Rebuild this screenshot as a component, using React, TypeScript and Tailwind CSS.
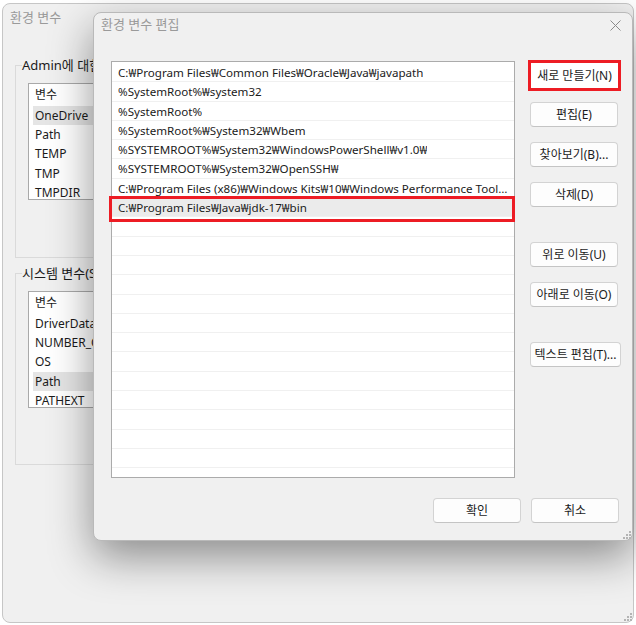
import React from "react";

const PATHS = [
  "C:₩Program Files₩Common Files₩Oracle₩Java₩javapath",
  "%SystemRoot%₩system32",
  "%SystemRoot%",
  "%SystemRoot%₩System32₩Wbem",
  "%SYSTEMROOT%₩System32₩WindowsPowerShell₩v1.0₩",
  "%SYSTEMROOT%₩System32₩OpenSSH₩",
  "C:₩Program Files (x86)₩Windows Kits₩10₩Windows Performance Toolkit₩",
  "C:₩Program Files₩Java₩jdk-17₩bin",
];

const USER_VARS = ["OneDrive", "Path", "TEMP", "TMP", "TMPDIR", "ZES_ENABLE_SYSMAN"];
const SYS_VARS = ["DriverData", "NUMBER_OF_PROCESSORS", "OS", "Path", "PATHEXT", "PROCESSOR_ARCHITECTURE"];

function Grip() {
  return (
    <svg width="9" height="9" viewBox="0 0 9 9" className="fill-[#b4b4b4]">
      <rect x="7" y="1" width="2" height="2" />
      <rect x="4" y="4" width="2" height="2" />
      <rect x="7" y="4" width="2" height="2" />
      <rect x="1" y="7" width="2" height="2" />
      <rect x="4" y="7" width="2" height="2" />
      <rect x="7" y="7" width="2" height="2" />
    </svg>
  );
}

function Btn({ label, className = "" }: { label: string; className?: string }) {
  return (
    <button
      className={`h-[25px] w-[88px] rounded-[4px] border border-[#d3d3d3] border-b-[#c4c4c4] bg-[#fdfdfd] text-[12px] text-[#1b1b1b] flex items-center justify-center whitespace-nowrap ${className}`}
    >
      {label}
    </button>
  );
}

function VarList({ items, selected }: { items: string[]; selected: number }) {
  return (
    <div className="ml-[6px] h-[117px] w-[560px] overflow-hidden border border-[#a9a9a9] bg-white">
      <div className="h-[22px] pl-[6px] flex items-center text-[12px] text-[#1b1b1b]">변수</div>
      {items.map((v, i) => (
        <div
          key={v}
          className={`ml-[4px] h-[19.3px] pl-[2px] flex items-center text-[12px] text-[#1b1b1b] ${
            i === selected ? "bg-[#e5e5e5]" : ""
          }`}
        >
          {v}
        </div>
      ))}
    </div>
  );
}

export default function App() {
  const rows = Array.from({ length: 22 }, (_, i) => PATHS[i] ?? "");

  return (
    <div className="relative w-[636px] h-[625px] bg-white overflow-hidden font-['Noto_Sans','Noto_Sans_CJK_KR',sans-serif]">
      {/* background window: 환경 변수 */}
      <div className="absolute left-[2px] top-[3px] w-[632px] h-[620px] rounded-[8px] border border-[#c6c6c6] bg-[#f0f0f0]">
        <div className="mt-[4px] pl-[7px] h-[18px] leading-[18px] text-[13px] text-[#9a9a9a]">환경 변수</div>

        <fieldset className="mt-[30px] ml-[12px] w-[600px] h-[202px] border border-[#dadada] pl-[6px]">
          <legend className="text-[13px] leading-[18px] text-[#1b1b1b]">Admin에 대한 사용자 변수(U)</legend>
          <div className="mt-[9px]">
            <VarList items={USER_VARS} selected={0} />
          </div>
        </fieldset>

        <fieldset className="mt-[6px] ml-[12px] w-[600px] h-[201px] border border-[#dadada] pl-[6px]">
          <legend className="text-[13px] leading-[18px] text-[#1b1b1b]">시스템 변수(S)</legend>
          <div className="mt-[9px]">
            <VarList items={SYS_VARS} selected={3} />
          </div>
        </fieldset>

        <div className="absolute right-[1px] bottom-[1px]">
          <Grip />
        </div>
      </div>

      {/* dialog: 환경 변수 편집 */}
      <div className="absolute left-[93px] top-[12px] w-[540px] h-[529px] rounded-[8px] border border-[#b9b9b9] bg-[#f0f0f0] shadow-[0_16px_44px_rgba(0,0,0,0.42)]">
        <div className="flex items-center justify-between h-[24px] pl-[7px] pr-[11px]">
          <span className="text-[13px] text-[#9a9a9a]">환경 변수 편집</span>
          <svg width="11" height="11" viewBox="0 0 11 11" className="stroke-[#8a8a8a]">
            <path d="M0.5 0.5L10.5 10.5M10.5 0.5L0.5 10.5" strokeWidth="1" />
          </svg>
        </div>

        <div className="mt-[24px] flex">
          <div className="relative ml-[17px] w-[404px] h-[417px] border border-[#ababab] bg-white pt-[1px]">
            <div className="h-full overflow-hidden">
              {rows.map((r, i) => (
                <div
                  key={i}
                  className={`h-[19.3px] border-b border-[#f0f0f0] pl-[6px] pr-[4px] pt-[1px] flex items-center text-[11.6px] text-[#1b1b1b] ${
                    i === 7 ? "bg-[#ebebeb]" : ""
                  }`}
                >
                  <span className="truncate">{r}</span>
                </div>
              ))}
            </div>
            <div className="absolute left-[-3px] top-[134px] w-[406px] h-[26px] border-[3px] border-[#ed1c24]" />
          </div>

          <div className="ml-[13px] -mt-[1px] flex flex-col">
            <button className="h-[31px] w-[93px] border-[3px] border-[#ed1c24] bg-white text-[12px] text-[#1b1b1b] flex items-center justify-center whitespace-nowrap">
              새로 만들기(N)
            </button>
            <Btn label="편집(E)" className="mt-[11px] ml-[2px]" />
            <Btn label="찾아보기(B)..." className="mt-[15px] ml-[2px]" />
            <Btn label="삭제(D)" className="mt-[15px] ml-[2px]" />
            <Btn label="위로 이동(U)" className="mt-[35px] ml-[2px]" />
            <Btn label="아래로 이동(O)" className="mt-[15px] ml-[2px]" />
            <Btn label="텍스트 편집(T)..." className="mt-[35px] ml-[2px] w-[91px]" />
          </div>
        </div>

        <div className="mt-[20px] flex justify-end gap-[10px] pr-[13px]">
          <Btn label="확인" />
          <Btn label="취소" />
        </div>

        <div className="absolute right-[1px] bottom-[1px]">
          <Grip />
        </div>
      </div>
    </div>
  );
}
